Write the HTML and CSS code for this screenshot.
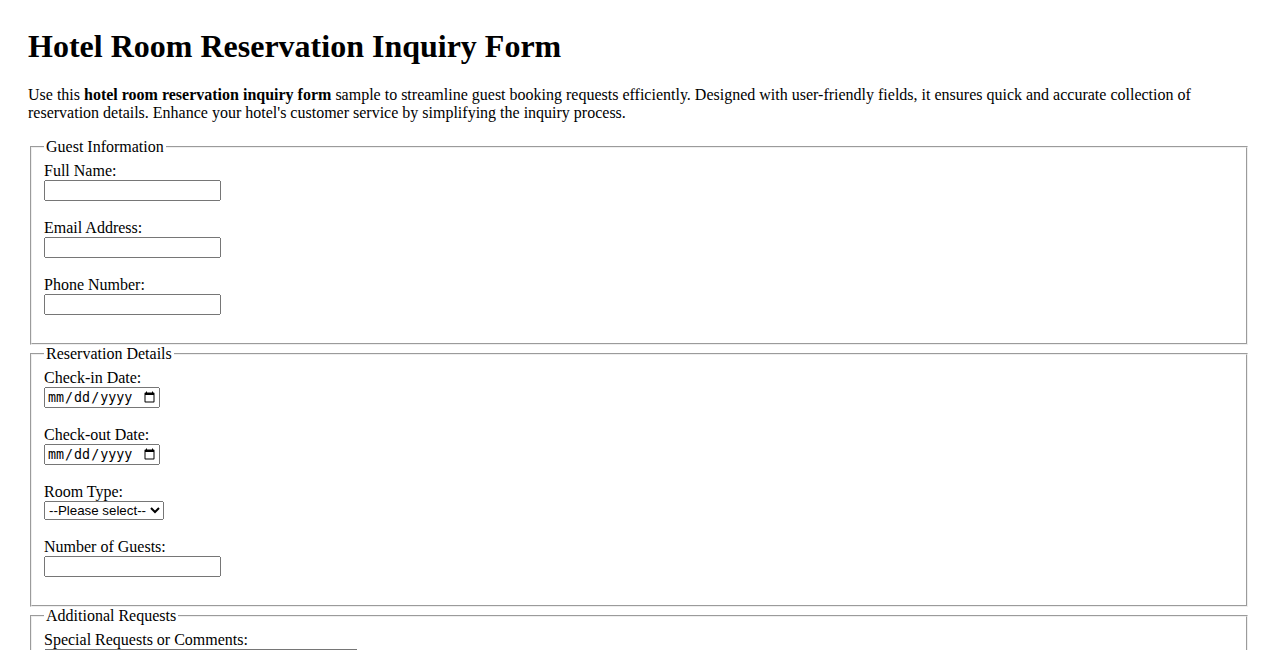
FILE: index.html
```html
<!DOCTYPE html>
<html lang="en">
<head>
  <meta charset="UTF-8">
  <title>Hotel Room Reservation Inquiry Form</title>
  <link rel="stylesheet" href="styles.css">
</head>
<body>
  <h1>Hotel Room Reservation Inquiry Form</h1>
  <p>Use this <strong>hotel room reservation inquiry form</strong> sample to streamline guest booking requests efficiently. Designed with user-friendly fields, it ensures quick and accurate collection of reservation details. Enhance your hotel's customer service by simplifying the inquiry process.</p>

  <form>
    <fieldset>
      <legend>Guest Information</legend>
      <label for="fullName">Full Name:</label><br>
      <input type="text" id="fullName" name="fullName"><br><br>
      <label for="email">Email Address:</label><br>
      <input type="email" id="email" name="email"><br><br>
      <label for="phone">Phone Number:</label><br>
      <input type="tel" id="phone" name="phone"><br><br>
    </fieldset>

    <fieldset>
      <legend>Reservation Details</legend>
      <label for="checkIn">Check-in Date:</label><br>
      <input type="date" id="checkIn" name="checkIn"><br><br>
      <label for="checkOut">Check-out Date:</label><br>
      <input type="date" id="checkOut" name="checkOut"><br><br>
      <label for="roomType">Room Type:</label><br>
      <select id="roomType" name="roomType">
        <option value="">--Please select--</option>
        <option value="single">Single</option>
        <option value="double">Double</option>
        <option value="suite">Suite</option>
      </select><br><br>
      <label for="guests">Number of Guests:</label><br>
      <input type="number" id="guests" name="guests"><br><br>
    </fieldset>

    <fieldset>
      <legend>Additional Requests</legend>
      <label for="comments">Special Requests or Comments:</label><br>
      <textarea id="comments" name="comments" rows="4" cols="40"></textarea><br><br>
    </fieldset>
  </form>
</body>
</html>
```

FILE: styles.css
```css
body {
  margin: 0;
  padding: 28px;
  font-family: "Liberation Serif", "Times New Roman", serif;
}

h1 {
  margin-top: 0;
}

input[type="text"],
input[type="email"],
input[type="tel"],
input[type="number"] {
  box-sizing: border-box;
  width: 177px;
}

input[type="date"] {
  box-sizing: border-box;
  width: 116px;
}

textarea {
  box-sizing: border-box;
  width: 314px;
}
```
